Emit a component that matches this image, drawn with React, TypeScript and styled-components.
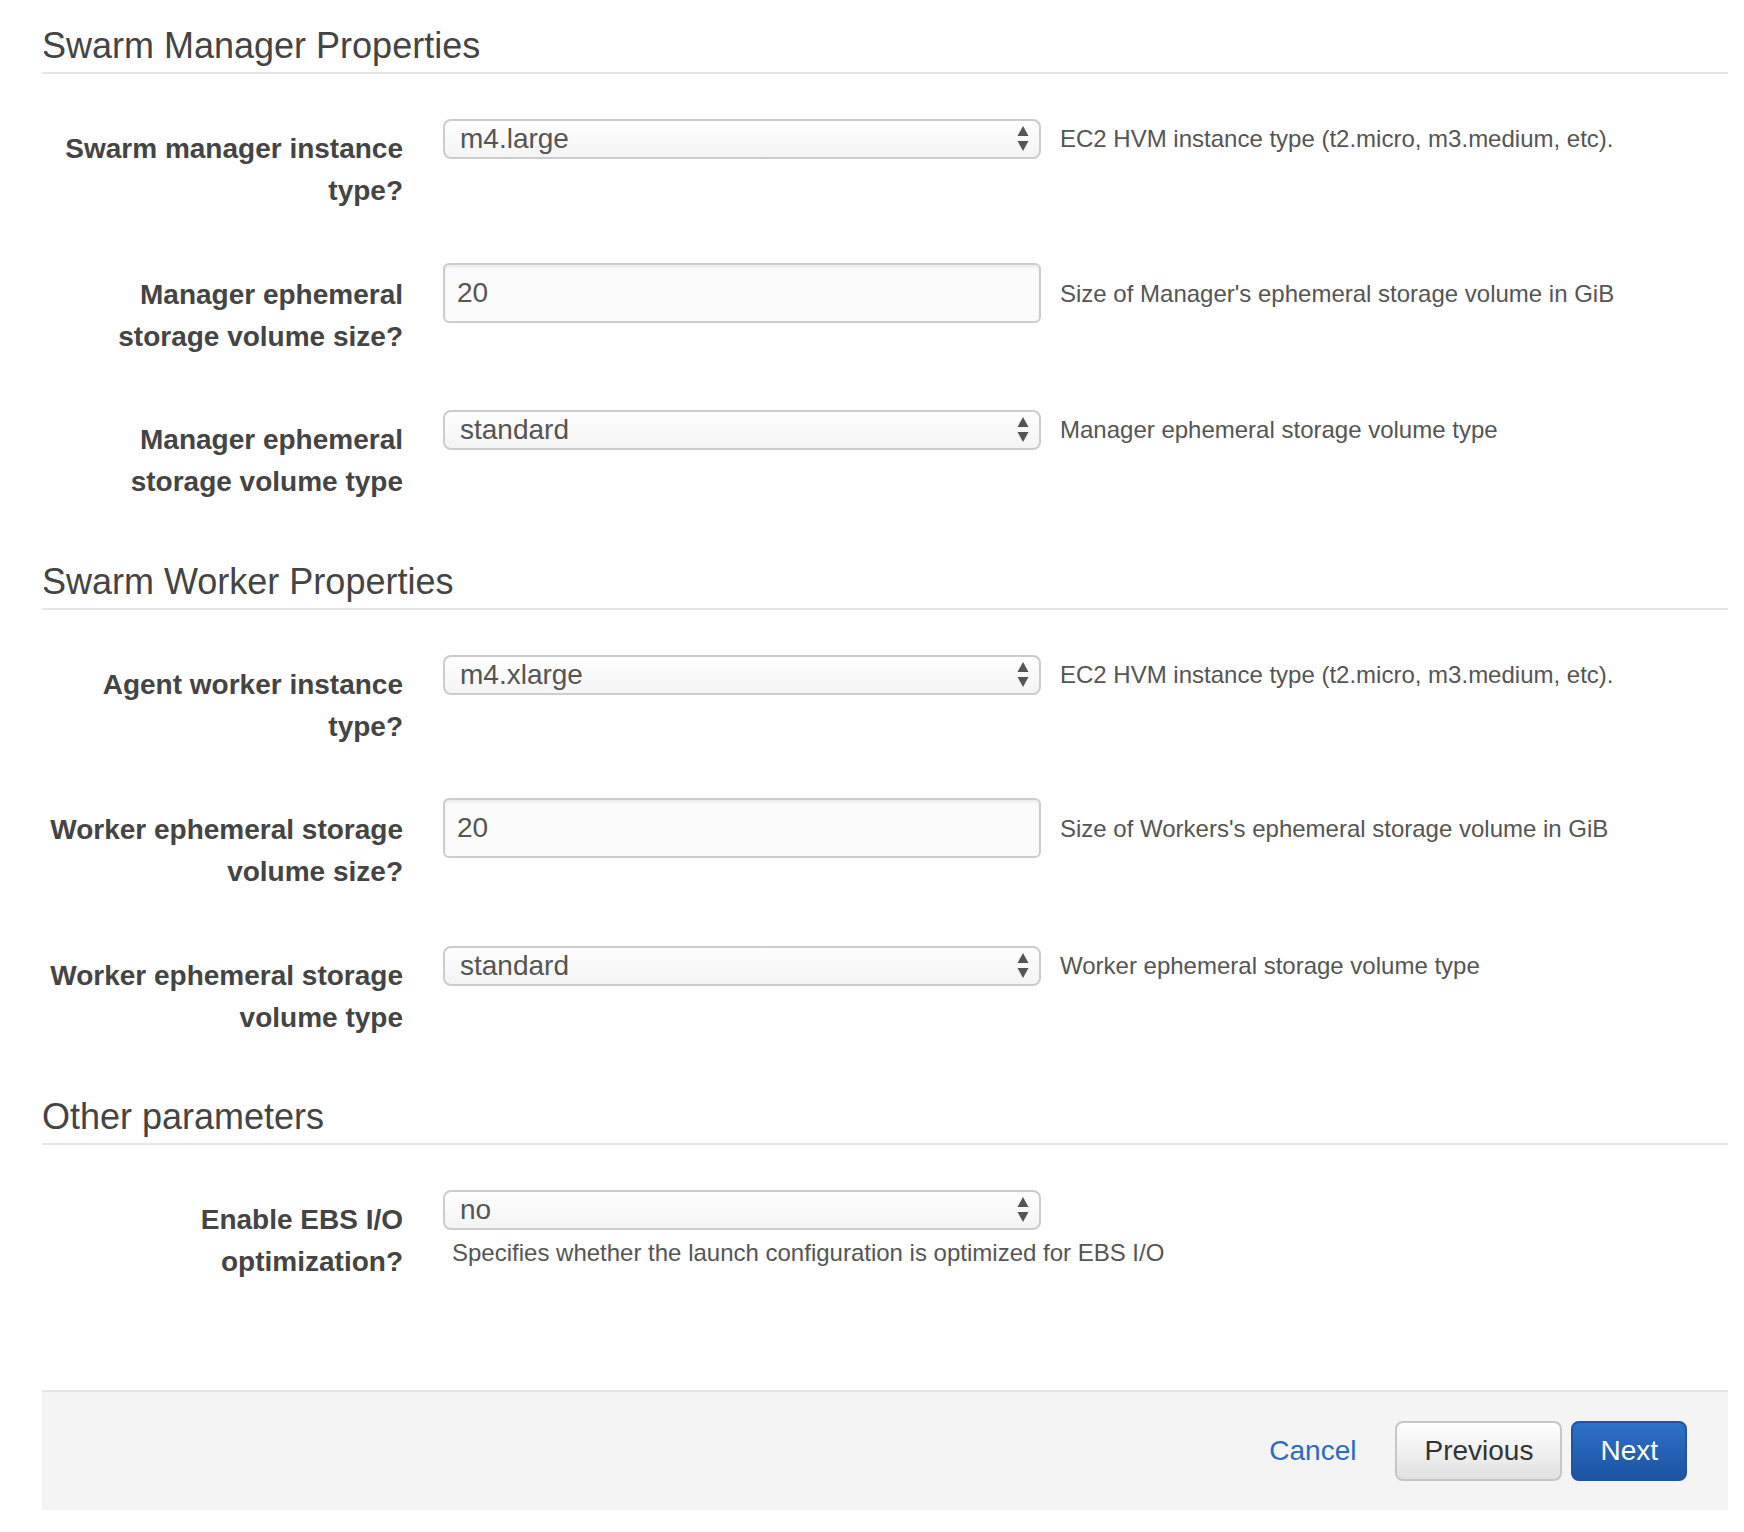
import React from "react";
import styled, { createGlobalStyle } from "styled-components";

const GlobalStyle = createGlobalStyle`
  html, body {
    margin: 0;
    padding: 0;
    background: #ffffff;
  }
  body {
    font-family: "Liberation Sans", Arial, sans-serif;
    color: #444444;
  }
  * { box-sizing: border-box; }
`;

const Page = styled.div`
  display: flex;
  flex-direction: column;
  padding: 26px 16px 23px 42px;
`;

const Section = styled.section<{ $first?: boolean }>`
  display: flex;
  flex-direction: column;
  margin-top: ${(p) => (p.$first ? "0" : "6px")};
`;

const SectionTitle = styled.h2`
  margin: 0;
  font-size: 36px;
  font-weight: 400;
  line-height: 40px;
  color: #444444;
  padding-bottom: 6px;
  border-bottom: 2px solid #e6e6e6;
`;

const Fields = styled.div`
  display: flex;
  flex-direction: column;
  padding-top: 45px;
`;

const Row = styled.div`
  display: flex;
  align-items: flex-start;
  margin-bottom: 52.5px;
`;

const Label = styled.label`
  flex: 0 0 361px;
  width: 361px;
  text-align: right;
  font-size: 28px;
  font-weight: 700;
  line-height: 42px;
  padding-top: 9px;
  color: #444444;
`;

const ControlArea = styled.div`
  margin-left: 40px;
  display: flex;
  flex-direction: column;
`;

const ControlLine = styled.div`
  display: flex;
  align-items: center;
  gap: 19px;
`;

const SelectWrap = styled.div`
  position: relative;
  width: 598px;
  height: 40px;
`;

const Select = styled.select`
  appearance: none;
  -webkit-appearance: none;
  width: 100%;
  height: 100%;
  margin: 0;
  border: 2px solid #cccccc;
  border-radius: 8px;
  background: linear-gradient(#fefefe, #f4f4f4);
  font-family: "Liberation Sans", Arial, sans-serif;
  font-size: 28px;
  line-height: 36px;
  color: #555555;
  padding: 0 40px 0 15px;
  outline: none;
`;

const Arrows = styled.svg`
  position: absolute;
  right: 12px;
  top: 7px;
  width: 12px;
  height: 26px;
  pointer-events: none;
`;

const TextInput = styled.input`
  width: 598px;
  height: 60px;
  margin: -2px 0 0;
  border: 2px solid #cccccc;
  border-radius: 6px;
  background: #fbfbfb;
  box-shadow: inset 0 2px 3px rgba(0, 0, 0, 0.07);
  font-family: "Liberation Sans", Arial, sans-serif;
  font-size: 28px;
  color: #555555;
  padding: 0 12px;
  outline: none;
`;

const Description = styled.div`
  font-size: 24px;
  line-height: 32px;
  color: #555555;
  white-space: nowrap;
`;

const HelpBelow = styled.div`
  margin-top: 5px;
  padding-left: 9px;
  font-size: 24px;
  line-height: 36px;
  color: #555555;
  white-space: nowrap;
`;

const Footer = styled.div`
  margin-top: 54.5px;
  background: #f4f4f4;
  border-top: 2px solid #e4e4e4;
  padding: 29px 41px 29px 0;
  display: flex;
  justify-content: flex-end;
  align-items: center;
`;

const CancelLink = styled.a`
  font-size: 28px;
  color: #2b6bc1;
  text-decoration: none;
  margin-right: 39px;
  cursor: pointer;
`;

const Button = styled.button<{ $primary?: boolean }>`
  height: 60px;
  padding: 0 27px;
  margin: 0;
  font-family: "Liberation Sans", Arial, sans-serif;
  font-size: 28px;
  border-radius: 8px;
  cursor: pointer;
  border: 2px solid ${(p) => (p.$primary ? "#1f55a2" : "#c6c6c6")};
  color: ${(p) => (p.$primary ? "#ffffff" : "#333333")};
  background: ${(p) =>
    p.$primary
      ? "linear-gradient(#2e71c8, #1d53a2)"
      : "linear-gradient(#ffffff, #e1e1e1)"};
  & + & {
    margin-left: 9px;
  }
`;

const SelectArrows = () => (
  <Arrows viewBox="0 0 12 26">
    <path d="M6 0 L11.5 10 L0.5 10 Z" fill="#555555" />
    <path d="M0.5 15 L11.5 15 L6 25 Z" fill="#555555" />
  </Arrows>
);

type Field =
  | { kind: "select"; label: string; value: string; desc: string; below?: boolean }
  | { kind: "input"; label: string; value: string; desc: string };

const Control = ({ field }: { field: Field }) => {
  if (field.kind === "select") {
    return (
      <SelectWrap>
        <Select defaultValue={field.value}>
          <option value={field.value}>{field.value}</option>
        </Select>
        <SelectArrows />
      </SelectWrap>
    );
  }
  return <TextInput type="text" defaultValue={field.value} />;
};

const FieldRow = ({ field }: { field: Field }) => {
  const below = field.kind === "select" && field.below;
  return (
    <Row>
      <Label>{field.label}</Label>
      <ControlArea>
        {below ? (
          <>
            <Control field={field} />
            <HelpBelow>{field.desc}</HelpBelow>
          </>
        ) : (
          <ControlLine>
            <Control field={field} />
            <Description>{field.desc}</Description>
          </ControlLine>
        )}
      </ControlArea>
    </Row>
  );
};

const sections: { title: string; fields: Field[] }[] = [
  {
    title: "Swarm Manager Properties",
    fields: [
      {
        kind: "select",
        label: "Swarm manager instance type?",
        value: "m4.large",
        desc: "EC2 HVM instance type (t2.micro, m3.medium, etc).",
      },
      {
        kind: "input",
        label: "Manager ephemeral storage volume size?",
        value: "20",
        desc: "Size of Manager's ephemeral storage volume in GiB",
      },
      {
        kind: "select",
        label: "Manager ephemeral storage volume type",
        value: "standard",
        desc: "Manager ephemeral storage volume type",
      },
    ],
  },
  {
    title: "Swarm Worker Properties",
    fields: [
      {
        kind: "select",
        label: "Agent worker instance type?",
        value: "m4.xlarge",
        desc: "EC2 HVM instance type (t2.micro, m3.medium, etc).",
      },
      {
        kind: "input",
        label: "Worker ephemeral storage volume size?",
        value: "20",
        desc: "Size of Workers's ephemeral storage volume in GiB",
      },
      {
        kind: "select",
        label: "Worker ephemeral storage volume type",
        value: "standard",
        desc: "Worker ephemeral storage volume type",
      },
    ],
  },
  {
    title: "Other parameters",
    fields: [
      {
        kind: "select",
        label: "Enable EBS I/O optimization?",
        value: "no",
        desc: "Specifies whether the launch configuration is optimized for EBS I/O",
        below: true,
      },
    ],
  },
];

export default function App() {
  return (
    <>
      <GlobalStyle />
      <Page>
        {sections.map((s, i) => (
          <Section key={s.title} $first={i === 0}>
            <SectionTitle>{s.title}</SectionTitle>
            <Fields>
              {s.fields.map((f) => (
                <FieldRow key={f.label} field={f} />
              ))}
            </Fields>
          </Section>
        ))}
        <Footer>
          <CancelLink>Cancel</CancelLink>
          <Button type="button">Previous</Button>
          <Button type="button" $primary>
            Next
          </Button>
        </Footer>
      </Page>
    </>
  );
}
